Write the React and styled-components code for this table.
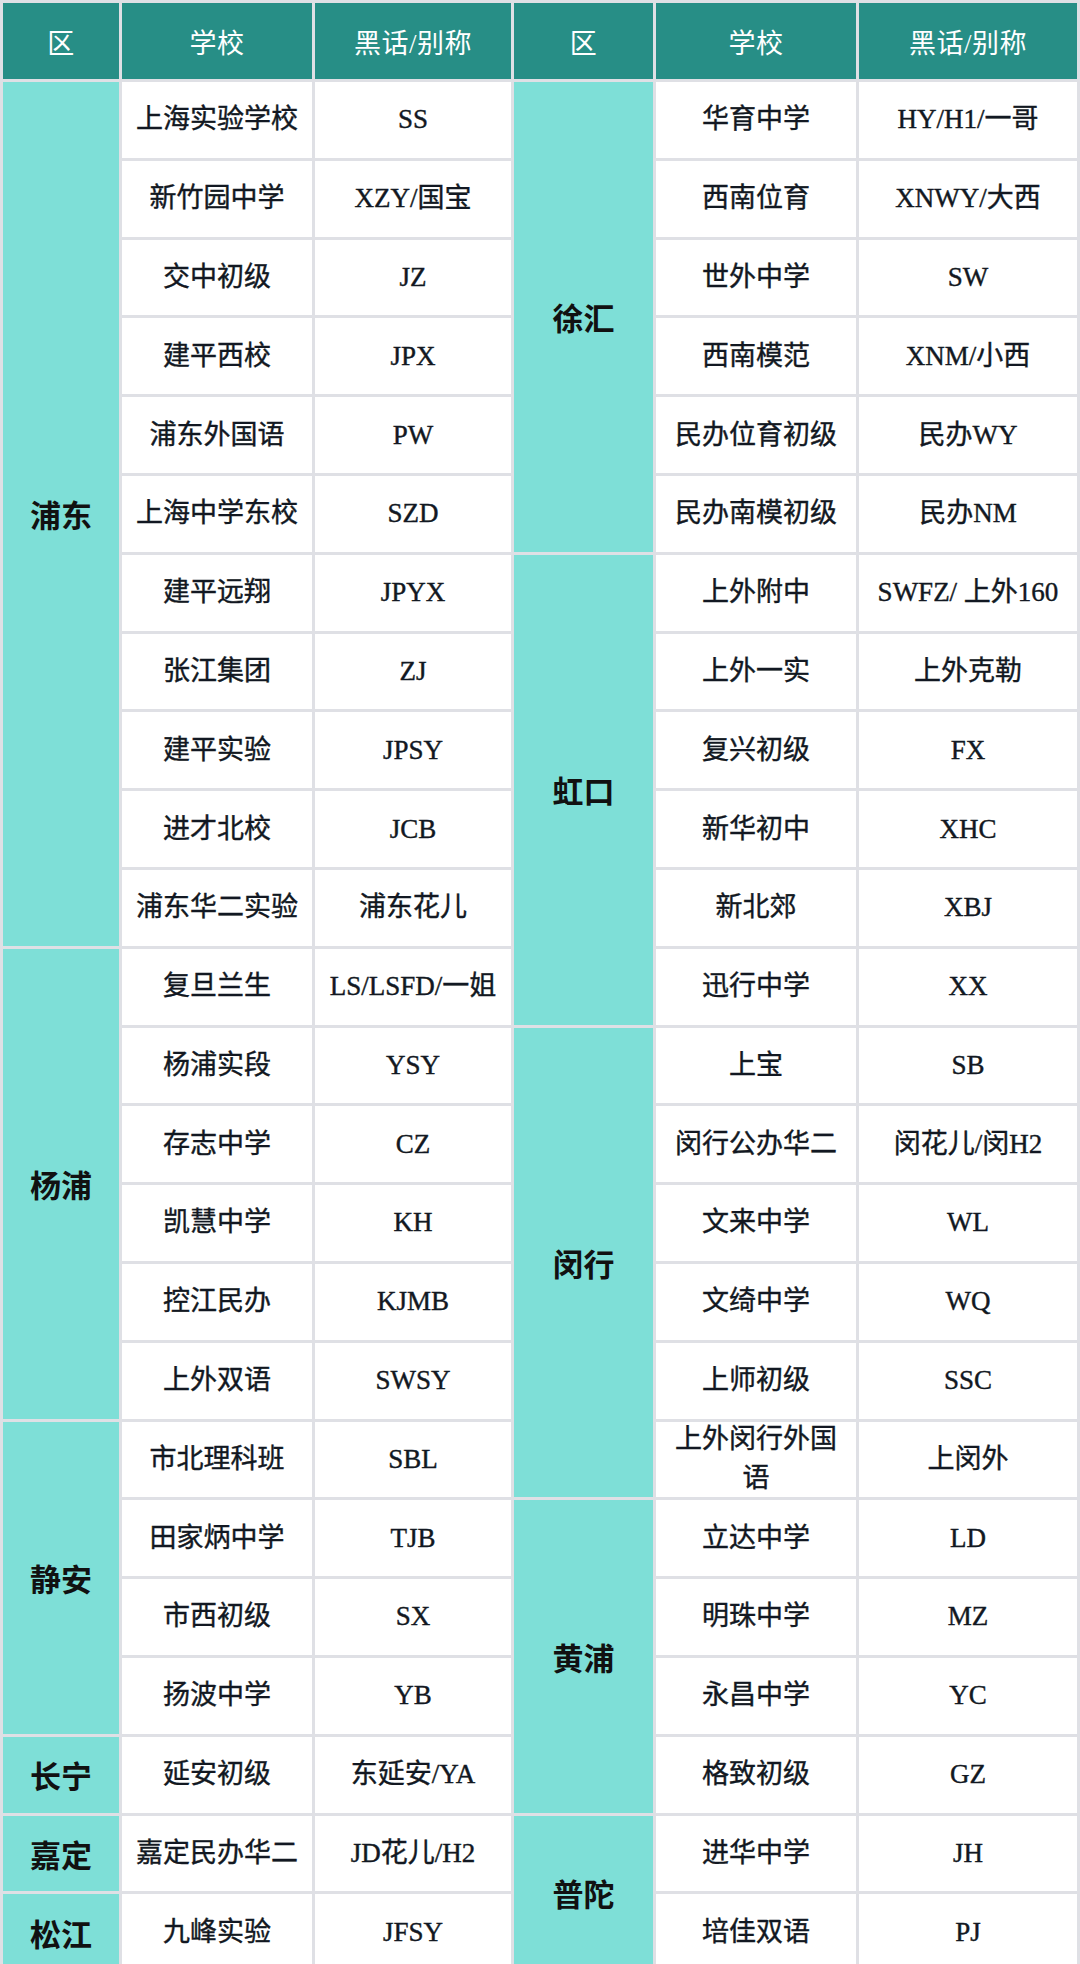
import React from 'react';
import styled, { createGlobalStyle } from 'styled-components';

const GlobalStyle = createGlobalStyle`
  html, body {
    margin: 0;
    padding: 0;
    background: #dfe0e5;
  }
  body {
    font-family: 'Liberation Serif', 'Noto Sans CJK SC', serif;
  }
`;

const Page = styled.div`
  display: grid;
  grid-template-columns: 508px 563px;
  gap: 3px;
  padding: 3px;
  background: #dfe0e5;
  width: 1080px;
  box-sizing: border-box;
`;

const Half = styled.div`
  display: grid;
  grid-template-columns: ${(p) => p.$cols};
  grid-template-rows: 76px repeat(24, 75.8px);
  gap: 3px;
`;

const HeadCell = styled.div`
  grid-column: ${(p) => p.$col};
  grid-row: 1;
  background: #278e86;
  color: #ffffff;
  font-size: 27px;
  display: flex;
  align-items: center;
  justify-content: center;
  letter-spacing: 0.5px;
`;

const District = styled.div`
  grid-column: 1;
  grid-row: span ${(p) => p.$span};
  background: #7edfd7;
  color: #111;
  font-size: 31px;
  font-weight: 700;
  display: flex;
  align-items: center;
  justify-content: center;
`;

const Cell = styled.div`
  grid-column: ${(p) => p.$col};
  background: #ffffff;
  color: #121822;
  font-size: 27px;
  font-weight: 400;
  line-height: 1.45;
  padding: 0 10px;
  display: flex;
  align-items: center;
  justify-content: center;
  text-align: center;
  -webkit-text-stroke: 0.4px #121822;
`;

const left = [
  ['浦东', [
    ['上海实验学校', 'SS'],
    ['新竹园中学', 'XZY/国宝'],
    ['交中初级', 'JZ'],
    ['建平西校', 'JPX'],
    ['浦东外国语', 'PW'],
    ['上海中学东校', 'SZD'],
    ['建平远翔', 'JPYX'],
    ['张江集团', 'ZJ'],
    ['建平实验', 'JPSY'],
    ['进才北校', 'JCB'],
    ['浦东华二实验', '浦东花儿'],
  ]],
  ['杨浦', [
    ['复旦兰生', 'LS/LSFD/一姐'],
    ['杨浦实段', 'YSY'],
    ['存志中学', 'CZ'],
    ['凯慧中学', 'KH'],
    ['控江民办', 'KJMB'],
    ['上外双语', 'SWSY'],
  ]],
  ['静安', [
    ['市北理科班', 'SBL'],
    ['田家炳中学', 'TJB'],
    ['市西初级', 'SX'],
    ['扬波中学', 'YB'],
  ]],
  ['长宁', [['延安初级', '东延安/YA']]],
  ['嘉定', [['嘉定民办华二', 'JD花儿/H2']]],
  ['松江', [['九峰实验', 'JFSY']]],
];

const right = [
  ['徐汇', [
    ['华育中学', 'HY/H1/一哥'],
    ['西南位育', 'XNWY/大西'],
    ['世外中学', 'SW'],
    ['西南模范', 'XNM/小西'],
    ['民办位育初级', '民办WY'],
    ['民办南模初级', '民办NM'],
  ]],
  ['虹口', [
    ['上外附中', 'SWFZ/ 上外160'],
    ['上外一实', '上外克勒'],
    ['复兴初级', 'FX'],
    ['新华初中', 'XHC'],
    ['新北郊', 'XBJ'],
    ['迅行中学', 'XX'],
  ]],
  ['闵行', [
    ['上宝', 'SB'],
    ['闵行公办华二', '闵花儿/闵H2'],
    ['文来中学', 'WL'],
    ['文绮中学', 'WQ'],
    ['上师初级', 'SSC'],
    ['上外闵行外国语', '上闵外'],
  ]],
  ['黄浦', [
    ['立达中学', 'LD'],
    ['明珠中学', 'MZ'],
    ['永昌中学', 'YC'],
    ['格致初级', 'GZ'],
  ]],
  ['普陀', [
    ['进华中学', 'JH'],
    ['培佳双语', 'PJ'],
  ]],
];

function SchoolTable({ groups, cols }) {
  return (
    <Half $cols={cols}>
      <HeadCell $col={1}>区</HeadCell>
      <HeadCell $col={2}>学校</HeadCell>
      <HeadCell $col={3}>黑话/别称</HeadCell>
      {groups.map(([name, rows]) => (
        <React.Fragment key={name}>
          <District $span={rows.length}>{name}</District>
          {rows.map(([school, alias]) => (
            <React.Fragment key={school}>
              <Cell $col={2}>{school}</Cell>
              <Cell $col={3}>{alias}</Cell>
            </React.Fragment>
          ))}
        </React.Fragment>
      ))}
    </Half>
  );
}

export default function App() {
  return (
    <>
      <GlobalStyle />
      <Page>
        <SchoolTable groups={left} cols='116px 190px 196px' />
        <SchoolTable groups={right} cols='139px 200px 218px' />
      </Page>
    </>
  );
}
